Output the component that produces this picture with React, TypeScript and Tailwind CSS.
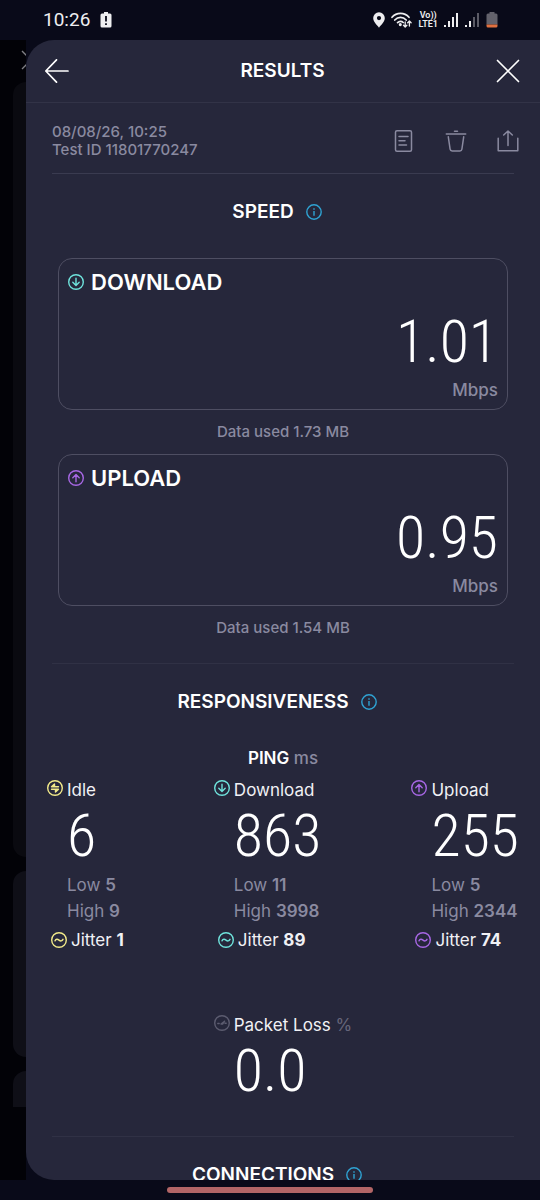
import type { ReactNode } from "react";

const DIGITS =
  "font-['Roboto_Condensed','Liberation_Sans_Narrow','Roboto',sans-serif] text-[60px]/[64px] font-light text-white";

const CYAN = "#6fe3dc";
const PURPLE = "#a767e4";
const YELLOW = "#f2ea8a";

function Ring({ color, children }: { color: string; children: ReactNode }) {
  return (
    <svg
      className="size-4 shrink-0"
      viewBox="0 0 16 16"
      fill="none"
      stroke={color}
      strokeWidth="1.4"
      strokeLinecap="round"
      strokeLinejoin="round"
      aria-hidden="true"
    >
      <circle cx="8" cy="8" r="7.3" />
      {children}
    </svg>
  );
}

const DownIcon = () => (
  <Ring color={CYAN}>
    <path d="M8 4.3v7M4.8 8.3 8 11.4l3.2-3.1" />
  </Ring>
);
const UpIcon = () => (
  <Ring color={PURPLE}>
    <path d="M8 11.7v-7M4.8 7.7 8 4.6l3.2 3.1" />
  </Ring>
);
const IdleIcon = () => (
  <Ring color={YELLOW}>
    <path d="M11.5 6.7h-7l3-2.7v2.7M4.5 9.3h7l-3 2.7V9.3" />
  </Ring>
);
const WaveIcon = ({ color }: { color: string }) => (
  <Ring color={color}>
    <path d="M4 8.8c1-1.9 2.4-2 4-.7s3 1.1 4-.8" />
  </Ring>
);
const LossIcon = () => (
  <Ring color="#5c5c70">
    <path d="M3.8 8.500h1.400M7 9l3.600-2.800L8.600 9zM11 8.300h1.200" />
  </Ring>
);

function InfoButton({ topic }: { topic: string }) {
  return (
    <button type="button" aria-label={`About ${topic}`} className="shrink-0">
      <svg className="size-4" viewBox="0 0 16 16" fill="none" stroke="#2fa3d3" strokeWidth="1.4">
        <circle cx="8" cy="8" r="7.2" />
        <path d="M8 7v4.800M8 4.200v1.500" />
      </svg>
    </button>
  );
}

function SectionTitle({ children }: { children: string }) {
  return (
    <div className="mt-[26px] flex items-center justify-center gap-3 pr-3">
      <h2 className="text-[19px]/6 font-semibold text-white">{children}</h2>
      <InfoButton topic={children.toLowerCase()} />
    </div>
  );
}

function SpeedCard({ icon, label, value, used }: { icon: ReactNode; label: string; value: string; used: string }) {
  return (
    <>
      <section className="mx-8 rounded-[14px] border border-[#4e4e62] pt-[11px] pr-[9px] pb-[7px] pl-[9px]">
        <h3 className="flex items-center gap-[7px] text-[22px]/6 font-semibold text-white">
          {icon}
          {label}
        </h3>
        <p className={`${DIGITS} mt-4 text-right`}>{value}</p>
        <p className="mt-1 text-right text-[17px]/6 font-medium">Mbps</p>
      </section>
      <p className="my-3 text-center text-[15px]/5 font-medium">Data used {used}</p>
    </>
  );
}

type Ping = { icon: ReactNode; color: string; label: string; value: string; low: string; high: string; jitter: string };

const PINGS: Ping[] = [
  { icon: <IdleIcon />, color: YELLOW, label: "Idle", value: "6", low: "5", high: "9", jitter: "1" },
  { icon: <DownIcon />, color: CYAN, label: "Download", value: "863", low: "11", high: "3998", jitter: "89" },
  { icon: <UpIcon />, color: PURPLE, label: "Upload", value: "255", low: "5", high: "2344", jitter: "74" },
];

function PingColumn({ icon, color, label, value, low, high, jitter }: Ping) {
  return (
    <div className="text-[17px]">
      <h4 className="flex gap-1 leading-6 text-[#f1f1f5]">
        <span className="pt-0.5">{icon}</span>
        {label}
      </h4>
      <p className={`${DIGITS} mt-0.5 pl-5`}>{value}</p>
      <p className="mt-1 pl-5 leading-[26px]">
        Low <b className="font-semibold">{low}</b>
      </p>
      <p className="pl-5 leading-[26px]">
        High <b className="font-semibold">{high}</b>
      </p>
      <p className="mt-1 flex items-center gap-1 pl-1 leading-6 text-[#f1f1f5]">
        <WaveIcon color={color} />
        <span>
          Jitter <b className="font-bold">{jitter}</b>
        </span>
      </p>
    </div>
  );
}

function Signal({ lit }: { lit: number }) {
  return (
    <svg className="h-4 w-[15px]" viewBox="0 0 15 16" aria-hidden="true">
      {[0, 1, 2, 3].map((i) => (
        <rect
          key={i}
          x={i * 4}
          y={[13, 9, 5, 1][i]}
          width="2"
          height={[2, 6, 10, 14][i]}
          fill={i < lit ? "#eeeef0" : "#5b5b66"}
        />
      ))}
    </svg>
  );
}

function StatusBar() {
  return (
    <header className="flex h-10 shrink-0 items-center pr-[42px] pl-[43px] font-['Roboto',sans-serif] text-[#eeeef0]">
      <span className="text-[19px]/6">10:26</span>
      <svg className="ml-2.5 h-4 w-3" viewBox="0 0 12 16" aria-hidden="true">
        <path d="M4 0h4v1.500h2A1.500 1.500 0 0 1 11.500 3v11a1.500 1.500 0 0 1-1.500 1.500H2A1.500 1.500 0 0 1 .5 14V3A1.500 1.500 0 0 1 2 1.500h2z" fill="currentColor" />
        <path d="M6 4v5.500M6 11.300v1.700" stroke="#0a0b1a" strokeWidth="1.8" />
      </svg>
      <div className="ml-auto flex items-center gap-1.5">
        <svg className="h-4 w-3" viewBox="0 0 12 16" aria-hidden="true">
          <path fillRule="evenodd" d="M6 .3a5.800 5.800 0 0 1 5.800 5.800C11.800 10 8 13 6 15.700 4 13 .2 10 .2 6.100A5.800 5.800 0 0 1 6 .3zm0 3.700a2.100 2.100 0 1 0 0 4.200A2.100 2.100 0 0 0 6 4z" fill="currentColor" />
        </svg>
        <svg className="h-4 w-[21px]" viewBox="0 0 21 16" fill="none" stroke="currentColor" strokeWidth="1.7" strokeLinecap="round" strokeLinejoin="round" aria-hidden="true">
          <path d="M1 5.300C5.500.1 13.500.1 18 5.300M3.800 8c3.200-3.600 8.200-3.600 11.400 0M6.600 10.700c1.700-1.800 4-1.800 5.600-.2" />
          <circle cx="9.300" cy="12.600" r=".7" fill="currentColor" />
          <path d="M14.200 10v4.800M12.500 13.300l1.700 1.700 1.700-1.700M18.400 14V9.200M16.700 10.700 18.400 9l1.700 1.700" strokeWidth="1.300" />
        </svg>
        <span className="flex flex-col items-center text-[9px]/[9px] font-semibold">
          <span>Vo))</span>
          <span>LTE1</span>
        </span>
        <Signal lit={4} />
        <Signal lit={2} />
        <svg className="h-4 w-3" viewBox="0 0 12 16" aria-hidden="true">
          <path d="M3.500 0h5v1.500H10A1.500 1.500 0 0 1 11.500 3v9.500H.5V3A1.500 1.500 0 0 1 2 1.500h1.500z" fill="#63626c" />
          <path d="M.5 12.500h11V14a1.500 1.500 0 0 1-1.500 1.500H2A1.500 1.500 0 0 1 .5 14z" fill="#e0703f" />
        </svg>
      </div>
    </header>
  );
}

function Backdrop() {
  return (
    <div className="flex w-[26px] shrink-0 flex-col overflow-hidden bg-[#020207] pl-[13px]" aria-hidden="true">
      <svg className="mt-2.5 ml-2 h-5 w-5 shrink-0" viewBox="0 0 20 20" stroke="#808086" strokeWidth="1.400">
        <path d="M1 1l18 18M1 19 19 1" />
      </svg>
      <div className="mt-3 flex-1 rounded-l-[13px] bg-[#0a0a10]" />
      <div className="mt-3.5 h-[186px] rounded-l-[13px] bg-[#0f0f17]" />
      <div className="mt-3.5 mb-[73px] h-9 rounded-tl-[13px] bg-[#0f0f17]" />
    </div>
  );
}

export default function App() {
  return (
    <div className="flex h-screen flex-col bg-[#090a19] font-['Inter',sans-serif] text-[#8a8aa0]">
      <StatusBar />
      <div className="flex min-h-0 flex-1">
        <Backdrop />
        <main className="min-w-0 flex-1 overflow-x-hidden overflow-y-auto rounded-l-[28px] bg-[#26273b] [scrollbar-width:none]">
          <div className="flex h-[63px] items-center justify-between border-b border-[#323347] pr-5 pl-[19px]">
            <button type="button" aria-label="Back">
              <svg className="size-6" viewBox="0 0 24 24" fill="none" stroke="#fff" strokeWidth="1.700" strokeLinecap="round" strokeLinejoin="round">
                <path d="M23 12H.8M11.500.8.8 12l10.700 11.200" />
              </svg>
            </button>
            <h1 className="text-[19px]/6 font-semibold text-white">RESULTS</h1>
            <button type="button" aria-label="Close">
              <svg className="size-6" viewBox="0 0 24 24" fill="none" stroke="#fff" strokeWidth="1.700" strokeLinecap="round">
                <path d="M1.500 1.500l21 21M1.500 22.500l21-21" />
              </svg>
            </button>
          </div>

          <div className="flex items-center justify-between pt-5 pr-[21px] pb-3.5 pl-[26px]">
            <p className="text-[15px]/[18px] font-medium">
              08/08/26, 10:25
              <br />
              Test ID 11801770247
            </p>
            <div className="flex gap-[30px]">
              <button type="button" aria-label="Details">
                <svg className="size-[22px]" viewBox="0 0 22 22" fill="none" stroke="#8a8aa0" strokeWidth="1.500" strokeLinecap="round">
                  <rect x="2.500" y=".8" width="16" height="20.400" rx="1.500" />
                  <path d="M6 6.500h9M6 10.700h6M6 15h7.500" />
                </svg>
              </button>
              <button type="button" aria-label="Delete">
                <svg className="size-[22px]" viewBox="0 0 22 22" fill="none" stroke="#8a8aa0" strokeWidth="1.500" strokeLinecap="round" strokeLinejoin="round">
                  <path d="M1.300 4h19.400M9.500 1.200h3M3.300 6.800l1.800 12.400c.2 1.200.8 1.800 2 1.800h7.800c1.200 0 1.800-.6 2-1.800l1.800-12.400" />
                </svg>
              </button>
              <button type="button" aria-label="Share">
                <svg className="size-[22px]" viewBox="0 0 22 22" fill="none" stroke="#8a8aa0" strokeWidth="1.500" strokeLinecap="round" strokeLinejoin="round">
                  <path d="M1.200 8.200v12.600h19.600V8.200M11 15.500V1.200M6.700 5 11 1l4.300 4" />
                </svg>
              </button>
            </div>
          </div>
          <hr className="mx-[26px] border-[#3a3b50]" />

          <SectionTitle>SPEED</SectionTitle>
          <div className="mt-[34px]">
            <SpeedCard icon={<DownIcon />} label="DOWNLOAD" value="1.01" used="1.73 MB" />
            <SpeedCard icon={<UpIcon />} label="UPLOAD" value="0.95" used="1.54 MB" />
          </div>
          <hr className="mx-[26px] mt-[25px] border-[#303145]" />

          <SectionTitle>RESPONSIVENESS</SectionTitle>
          <h3 className="mt-8 text-center text-[17px]/6 font-medium">
            <span className="font-semibold text-white">PING</span> ms
          </h3>
          <div className="mt-2 flex justify-between px-[21px]">
            {PINGS.map((p) => (
              <PingColumn key={p.label} {...p} />
            ))}
          </div>

          <div className="mt-[61px] flex justify-center">
            <div>
              <h4 className="flex gap-1 text-[17px]/6 text-[#f1f1f5]">
                <span className="pt-0.5">
                  <LossIcon />
                </span>
                <span>
                  Packet Loss <span className="text-[#66667a]">%</span>
                </span>
              </h4>
              <p className={`${DIGITS} mt-0.5 pl-5`}>0.0</p>
            </div>
          </div>
          <hr className="mx-[26px] mt-[33px] border-[#303145]" />
          <SectionTitle>CONNECTIONS</SectionTitle>
        </main>
      </div>
      <footer className="flex h-5 shrink-0 items-center justify-center">
        <div className="h-1.5 w-[38%] rounded-full bg-[#b26566]" />
      </footer>
    </div>
  );
}
